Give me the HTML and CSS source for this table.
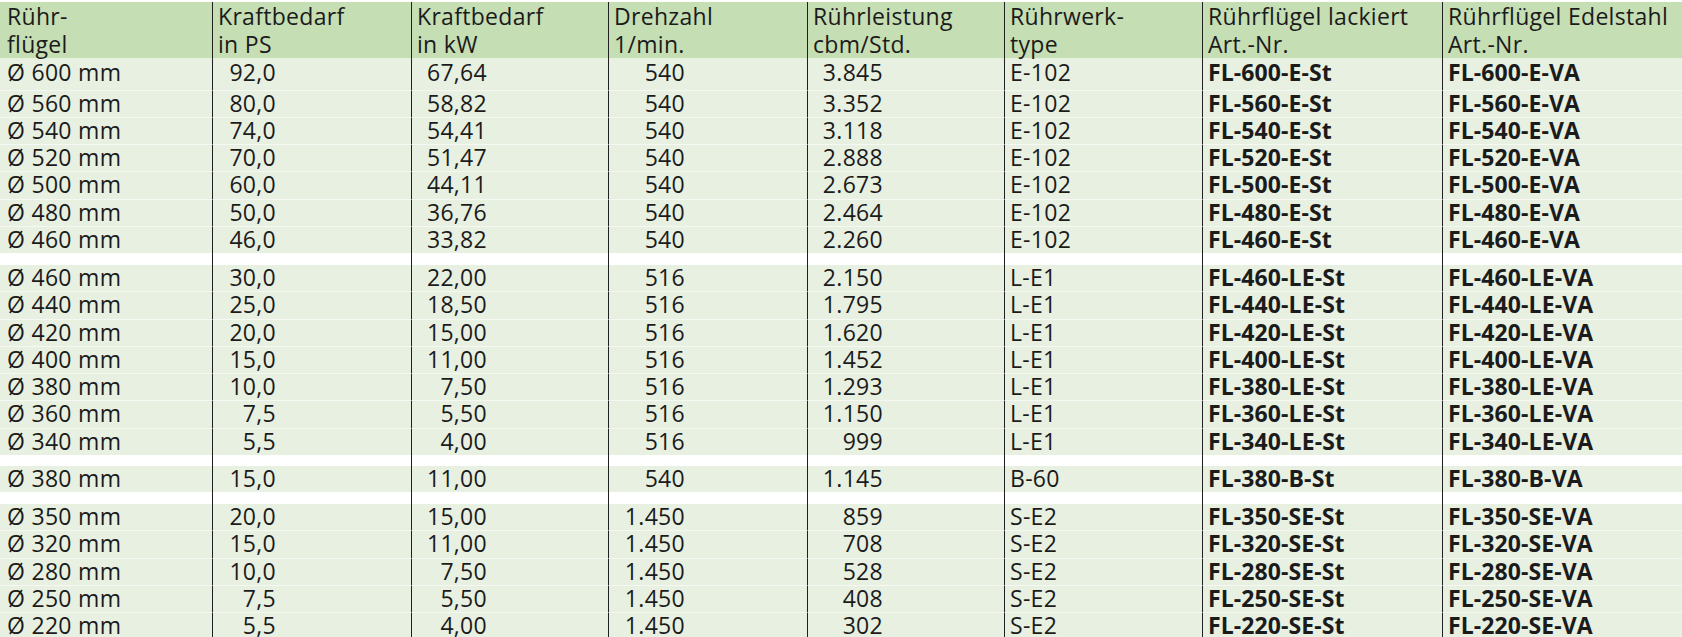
FILE: index.html
```html
<!DOCTYPE html>
<html lang="de">
<head>
<meta charset="utf-8">
<title>Rührflügel</title>
<link rel="stylesheet" href="styles.css">
</head>
<body>
<table class="spec">
  <colgroup>
    <col class="w1"><col class="w2"><col class="w3"><col class="w4"><col class="w5"><col class="w6"><col class="w7"><col class="w8">
  </colgroup>
  <thead>
    <tr>
      <th>Rühr-<br>flügel</th>
      <th>Kraftbedarf<br>in PS</th>
      <th>Kraftbedarf<br>in kW</th>
      <th>Drehzahl<br>1/min.</th>
      <th>Rührleistung<br>cbm/Std.</th>
      <th>Rührwerk-<br>type</th>
      <th>Rührflügel lackiert<br>Art.-Nr.</th>
      <th>Rührflügel Edelstahl<br>Art.-Nr.</th>
    </tr>
  </thead>
  <tbody class="sec first">
    <tr><td>Ø 600 mm</td><td class="c2">92,0</td><td class="c3">67,64</td><td class="c4">540</td><td class="c5">3.845</td><td>E-102</td><td class="b">FL-600-E-St</td><td class="b">FL-600-E-VA</td></tr>
    <tr><td>Ø 560 mm</td><td class="c2">80,0</td><td class="c3">58,82</td><td class="c4">540</td><td class="c5">3.352</td><td>E-102</td><td class="b">FL-560-E-St</td><td class="b">FL-560-E-VA</td></tr>
    <tr><td>Ø 540 mm</td><td class="c2">74,0</td><td class="c3">54,41</td><td class="c4">540</td><td class="c5">3.118</td><td>E-102</td><td class="b">FL-540-E-St</td><td class="b">FL-540-E-VA</td></tr>
    <tr><td>Ø 520 mm</td><td class="c2">70,0</td><td class="c3">51,47</td><td class="c4">540</td><td class="c5">2.888</td><td>E-102</td><td class="b">FL-520-E-St</td><td class="b">FL-520-E-VA</td></tr>
    <tr><td>Ø 500 mm</td><td class="c2">60,0</td><td class="c3">44,11</td><td class="c4">540</td><td class="c5">2.673</td><td>E-102</td><td class="b">FL-500-E-St</td><td class="b">FL-500-E-VA</td></tr>
    <tr><td>Ø 480 mm</td><td class="c2">50,0</td><td class="c3">36,76</td><td class="c4">540</td><td class="c5">2.464</td><td>E-102</td><td class="b">FL-480-E-St</td><td class="b">FL-480-E-VA</td></tr>
    <tr><td>Ø 460 mm</td><td class="c2">46,0</td><td class="c3">33,82</td><td class="c4">540</td><td class="c5">2.260</td><td>E-102</td><td class="b">FL-460-E-St</td><td class="b">FL-460-E-VA</td></tr>
  </tbody>
  <tbody class="gap g1"><tr><td></td><td></td><td></td><td></td><td></td><td></td><td></td><td></td></tr></tbody>
  <tbody class="sec">
    <tr><td>Ø 460 mm</td><td class="c2">30,0</td><td class="c3">22,00</td><td class="c4">516</td><td class="c5">2.150</td><td>L-E1</td><td class="b">FL-460-LE-St</td><td class="b">FL-460-LE-VA</td></tr>
    <tr><td>Ø 440 mm</td><td class="c2">25,0</td><td class="c3">18,50</td><td class="c4">516</td><td class="c5">1.795</td><td>L-E1</td><td class="b">FL-440-LE-St</td><td class="b">FL-440-LE-VA</td></tr>
    <tr><td>Ø 420 mm</td><td class="c2">20,0</td><td class="c3">15,00</td><td class="c4">516</td><td class="c5">1.620</td><td>L-E1</td><td class="b">FL-420-LE-St</td><td class="b">FL-420-LE-VA</td></tr>
    <tr><td>Ø 400 mm</td><td class="c2">15,0</td><td class="c3">11,00</td><td class="c4">516</td><td class="c5">1.452</td><td>L-E1</td><td class="b">FL-400-LE-St</td><td class="b">FL-400-LE-VA</td></tr>
    <tr><td>Ø 380 mm</td><td class="c2">10,0</td><td class="c3">7,50</td><td class="c4">516</td><td class="c5">1.293</td><td>L-E1</td><td class="b">FL-380-LE-St</td><td class="b">FL-380-LE-VA</td></tr>
    <tr><td>Ø 360 mm</td><td class="c2">7,5</td><td class="c3">5,50</td><td class="c4">516</td><td class="c5">1.150</td><td>L-E1</td><td class="b">FL-360-LE-St</td><td class="b">FL-360-LE-VA</td></tr>
    <tr><td>Ø 340 mm</td><td class="c2">5,5</td><td class="c3">4,00</td><td class="c4">516</td><td class="c5">999</td><td>L-E1</td><td class="b">FL-340-LE-St</td><td class="b">FL-340-LE-VA</td></tr>
  </tbody>
  <tbody class="gap g2"><tr><td></td><td></td><td></td><td></td><td></td><td></td><td></td><td></td></tr></tbody>
  <tbody class="sec">
    <tr><td>Ø 380 mm</td><td class="c2">15,0</td><td class="c3">11,00</td><td class="c4">540</td><td class="c5">1.145</td><td>B-60</td><td class="b">FL-380-B-St</td><td class="b">FL-380-B-VA</td></tr>
  </tbody>
  <tbody class="gap g3"><tr><td></td><td></td><td></td><td></td><td></td><td></td><td></td><td></td></tr></tbody>
  <tbody class="sec">
    <tr><td>Ø 350 mm</td><td class="c2">20,0</td><td class="c3">15,00</td><td class="c4">1.450</td><td class="c5">859</td><td>S-E2</td><td class="b">FL-350-SE-St</td><td class="b">FL-350-SE-VA</td></tr>
    <tr><td>Ø 320 mm</td><td class="c2">15,0</td><td class="c3">11,00</td><td class="c4">1.450</td><td class="c5">708</td><td>S-E2</td><td class="b">FL-320-SE-St</td><td class="b">FL-320-SE-VA</td></tr>
    <tr><td>Ø 280 mm</td><td class="c2">10,0</td><td class="c3">7,50</td><td class="c4">1.450</td><td class="c5">528</td><td>S-E2</td><td class="b">FL-280-SE-St</td><td class="b">FL-280-SE-VA</td></tr>
    <tr><td>Ø 250 mm</td><td class="c2">7,5</td><td class="c3">5,50</td><td class="c4">1.450</td><td class="c5">408</td><td>S-E2</td><td class="b">FL-250-SE-St</td><td class="b">FL-250-SE-VA</td></tr>
    <tr><td>Ø 220 mm</td><td class="c2">5,5</td><td class="c3">4,00</td><td class="c4">1.450</td><td class="c5">302</td><td>S-E2</td><td class="b">FL-220-SE-St</td><td class="b">FL-220-SE-VA</td></tr>
  </tbody>
</table>
</body>
</html>
```
FILE: styles.css
```css
html, body {
  margin: 0;
  padding: 0;
  background: #ffffff;
}

body {
  font-family: "Open Sans", "Noto Sans", "DejaVu Sans", sans-serif;
  font-size: 23px;
  letter-spacing: 0.3px;
  color: #1b1b1b;
  overflow: hidden;
}

.spec {
  border-collapse: separate;
  border-spacing: 0;
  table-layout: fixed;
  width: 1682px;
  margin-top: 2px;
}

.w1 { width: 212px; }
.w2 { width: 199px; }
.w3 { width: 197px; }
.w4 { width: 199px; }
.w5 { width: 197px; }
.w6 { width: 198px; }
.w7 { width: 240px; }
.w8 { width: 240px; }

.spec th,
.spec td {
  padding: 0 0 0 5px;
  text-align: left;
  vertical-align: top;
  white-space: nowrap;
}

.spec th + th,
.spec td + td {
  border-left: 1px solid #202020;
}

.spec th:first-child,
.spec td:first-child {
  padding-left: 7px;
}

.spec th {
  font-weight: 400;
  background: #c6deb4;
  line-height: 28px;
  padding-top: 0;
  padding-bottom: 0;
  height: 56px;
  box-sizing: border-box;
}

.sec td {
  background: #e8f0e1;
  line-height: 25.5px;
  padding-top: 0;
  padding-bottom: 0.75px;
}

.sec tr + tr td {
  border-top: 1px solid #f6f9f3;
}

.sec.first tr:first-child td {
  padding-top: 1.5px;
  padding-bottom: 4.5px;
}

.gap td {
  background: #ffffff;
  height: 10px;
  padding: 0;
  line-height: 0;
  font-size: 0;
}

.gap.g1 td { height: 12px; }
.gap.g2 td { height: 11px; }
.gap.g3 td { height: 12px; }

.spec td.c2 { text-align: right; padding-right: 135px; }
.spec td.c3 { text-align: right; padding-right: 121px; }
.spec td.c4 { text-align: right; padding-right: 122px; }
.spec td.c5 { text-align: right; padding-right: 121px; }

.spec td.b {
  font-weight: 700;
  letter-spacing: 0.1px;
}
```
